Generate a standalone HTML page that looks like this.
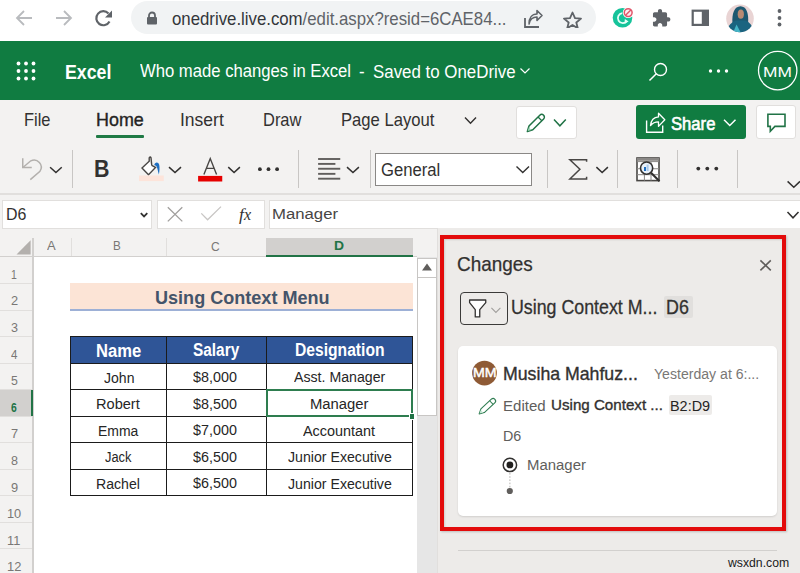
<!DOCTYPE html>
<html><head><meta charset="utf-8"><style>
html,body{margin:0;padding:0;width:800px;height:573px;overflow:hidden;background:#fff}
body{position:relative;font-family:"Liberation Sans", sans-serif}
div,span{position:absolute;white-space:nowrap}
</style></head><body>
<div style="left:0px;top:0px;width:800px;height:41px;background:#fff"></div>
<div style="left:131px;top:1px;width:465px;height:33px;background:#f1f3f4;border-radius:17px"></div>
<svg style="position:absolute;left:14px;top:8px;" width="20" height="20" viewBox="0 0 20 20"><path d="M18 10H4M10 3L3 10L10 17" stroke="#b9bbbe" stroke-width="1.8" fill="none"/></svg>
<svg style="position:absolute;left:54px;top:8px;" width="20" height="20" viewBox="0 0 20 20"><path d="M2 10H16M10 3L17 10L10 17" stroke="#b9bbbe" stroke-width="1.8" fill="none"/></svg>
<svg style="position:absolute;left:93px;top:8px;" width="22" height="20" viewBox="0 0 22 20"><path d="M16.5 13.5A7 7 0 1 1 15.5 5.5" stroke="#5f6368" stroke-width="2.2" fill="none"/><path d="M19 2.5V9.5H12Z" fill="#5f6368"/></svg>
<svg style="position:absolute;left:146px;top:11px;" width="12" height="14" viewBox="0 0 12 14"><path d="M3 6V4.5A3 3 0 0 1 9 4.5V6" stroke="#5f6368" stroke-width="1.8" fill="none"/><rect x="1" y="6" width="10" height="7.5" rx="1" fill="#5f6368"/></svg>
<span class="t0" style="left:171.83px;top:10.97px;font-size:17.59px;line-height:17.59px;transform:scaleX(0.9548);transform-origin:0 0;color:#33363a">onedrive.live.com<span style="color:#5f6368">/edit.aspx?resid=6CAE84...</span></span>
<svg style="position:absolute;left:522px;top:9px;" width="22" height="20" viewBox="0 0 22 20"><path d="M3 9V18H17" stroke="#5f6368" stroke-width="1.8" fill="none"/><path d="M7 15C8 10 11 8 15 8V11.5L20 6.5L15 1.5V5C10 5 7 9 7 15Z" stroke="#5f6368" stroke-width="1.6" fill="none" stroke-linejoin="round"/></svg>
<svg style="position:absolute;left:562px;top:11px;" width="21" height="17" viewBox="0 0 21 17"><path d="M10.5 1.5L13 7.2L19 7.6L14.3 11.5L15.8 17.3L10.5 14L5.2 17.3L6.7 11.5L2 7.6L8 7.2Z" stroke="#5f6368" stroke-width="1.8" fill="none" stroke-linejoin="round"/></svg>
<svg style="position:absolute;left:0;top:0" width="800" height="573" viewBox="0 0 800 573"><circle cx="622.5" cy="17.8" r="9.8" fill="#15c39a"/><path d="M622.3,13.2 A5,5 0 1 0 627,21" stroke="#e6fff7" stroke-width="1.8" fill="none"/><path d="M624.8,19 L628.6,21.4 L624.6,23.6 Z" fill="#e6fff7"/><circle cx="628.2" cy="12.6" r="5.4" fill="#fff"/><circle cx="628.2" cy="12.6" r="3.9" stroke="#e0566a" stroke-width="1.5" fill="#fdf0f2"/><path d="M625.6,15.2 L630.8,10" stroke="#e0566a" stroke-width="1.4"/></svg>
<svg style="position:absolute;left:0;top:0" width="800" height="573" viewBox="0 0 800 573"><g transform="translate(651.3,8.2) scale(0.83)"><path d="M20.5 11H19V7c0-1.1-.9-2-2-2h-4V3.5C13 2.12 11.88 1 10.5 1S8 2.12 8 3.5V5H4c-1.1 0-1.99.9-1.99 2v3.8H3.5c1.49 0 2.7 1.210 2.7 2.7s-1.21 2.7-2.7 2.7H2V20c0 1.1.9 2 2 2h3.8v-1.5c0-1.49 1.21-2.7 2.7-2.7 1.49 0 2.7 1.21 2.7 2.7V22H17c1.1 0 2-.9 2-2v-4h1.5c1.38 0 2.5-1.12 2.5-2.5S21.88 11 20.5 11z" fill="#5f6368"/></g></svg>
<svg style="position:absolute;left:0;top:0" width="800" height="573" viewBox="0 0 800 573"><rect x="692.7" y="10.7" width="15.2" height="14.2" stroke="#5f6368" stroke-width="2.2" fill="none"/><rect x="701.8" y="10" width="7.2" height="16" fill="#5f6368"/></svg>
<svg style="position:absolute;left:0;top:0" width="800" height="573" viewBox="0 0 800 573"><defs><clipPath id="av"><circle cx="740" cy="18.4" r="13.8"/></clipPath></defs><circle cx="740" cy="18.4" r="13.8" fill="#e9d4d4"/><g clip-path="url(#av)"><path d="M732.5,24 C731.5,13 734.5,6.5 740.5,6.2 C746.5,6.5 749,13 748,24 Z" fill="#1d5870"/><ellipse cx="740.8" cy="14.2" rx="3.1" ry="4.6" fill="#b88a72"/><path d="M726,34 C727,26 732,21.5 736.5,20.5 L745,20.5 C750,22 753,26 754,34 Z" fill="#1b6480"/><path d="M732.5,34 L736.5,24.5 L741.5,34 Z" fill="#44b4c6"/></g></svg>
<svg style="position:absolute;left:776px;top:8px;" width="8" height="20" viewBox="0 0 8 20"><circle cx="3.5" cy="3" r="1.9" fill="#5f6368"/><circle cx="3.5" cy="10" r="1.9" fill="#5f6368"/><circle cx="3.5" cy="16.5" r="1.9" fill="#5f6368"/></svg>
<div style="left:0px;top:41px;width:800px;height:59px;background:#107c41"></div>
<svg style="position:absolute;left:16px;top:60.5px;" width="22" height="22" viewBox="0 0 22 22"><circle cx="2.5" cy="2.5" r="1.9" fill="#fff"/><circle cx="2.5" cy="10.0" r="1.9" fill="#fff"/><circle cx="2.5" cy="17.5" r="1.9" fill="#fff"/><circle cx="10.0" cy="2.5" r="1.9" fill="#fff"/><circle cx="10.0" cy="10.0" r="1.9" fill="#fff"/><circle cx="10.0" cy="17.5" r="1.9" fill="#fff"/><circle cx="17.5" cy="2.5" r="1.9" fill="#fff"/><circle cx="17.5" cy="10.0" r="1.9" fill="#fff"/><circle cx="17.5" cy="17.5" r="1.9" fill="#fff"/></svg>
<span class="t1" style="left:64.76px;top:60.91px;font-size:21.08px;line-height:21.08px;transform:scaleX(0.8423);transform-origin:0 0;font-weight:bold;color:#fff">Excel</span>
<span class="t2" style="left:139.50px;top:61.51px;font-size:18.90px;line-height:18.90px;transform:scaleX(0.8814);transform-origin:0 0;color:#fff">Who made changes in Excel</span>
<span class="t3" style="left:358.73px;top:62.85px;font-size:18.90px;line-height:18.90px;transform:scaleX(0.8891);transform-origin:0 0;color:#fff">-</span>
<span class="t4" style="left:372.66px;top:62.88px;font-size:18.90px;line-height:18.90px;transform:scaleX(0.8937);transform-origin:0 0;color:#fff">Saved to OneDrive</span>
<svg style="position:absolute;left:519px;top:67px;" width="12" height="8" viewBox="0 0 12 8"><path d="M1.5 1.5L6 6L10.5 1.5" stroke="#fff" stroke-width="1.2" fill="none"/></svg>
<svg style="position:absolute;left:647px;top:62px;" width="22" height="21" viewBox="0 0 22 21"><circle cx="13.5" cy="7.5" r="6" stroke="#fff" stroke-width="1.4" fill="none"/><path d="M9.3 11.7L2.5 18.5" stroke="#fff" stroke-width="1.5"/></svg>
<svg style="position:absolute;left:708px;top:67px;" width="22" height="8" viewBox="0 0 22 8"><circle cx="2.5" cy="4" r="1.7" fill="#fff"/><circle cx="10.5" cy="4" r="1.7" fill="#fff"/><circle cx="18.5" cy="4" r="1.7" fill="#fff"/></svg>
<svg style="position:absolute;left:757px;top:50px;" width="42" height="42" viewBox="0 0 42 42"><circle cx="20.7" cy="20.6" r="19.2" stroke="#fff" stroke-width="1.3" fill="none"/></svg>
<span class="t5" style="left:762.61px;top:66.31px;font-size:13.81px;line-height:13.81px;transform:scaleX(1.2570);transform-origin:0 0;color:#fff">MM</span>
<div style="left:0px;top:100px;width:800px;height:93px;background:#f3f2f1"></div>
<div style="left:0px;top:193px;width:800px;height:1.5px;background:#e1dfdd"></div>
<div style="left:0px;top:194.5px;width:800px;height:6px;background:#f3f2f1"></div>
<span class="t6" style="left:23.68px;top:110.62px;font-size:18.17px;line-height:18.17px;transform:scaleX(0.9050);transform-origin:0 0;color:#323130">File</span>
<span class="t7" style="left:95.57px;top:110.62px;font-size:18.17px;line-height:18.17px;transform:scaleX(0.9867);transform-origin:0 0;-webkit-text-stroke:0.35px currentColor;color:#252423">Home</span>
<div style="left:96px;top:134.5px;width:48px;height:3.5px;background:#1f7a45;border-radius:1px"></div>
<span class="t8" style="left:180.43px;top:110.62px;font-size:18.17px;line-height:18.17px;transform:scaleX(0.9632);transform-origin:0 0;color:#323130">Insert</span>
<span class="t9" style="left:262.68px;top:110.62px;font-size:18.17px;line-height:18.17px;transform:scaleX(0.9064);transform-origin:0 0;color:#323130">Draw</span>
<span class="t10" style="left:340.67px;top:110.62px;font-size:18.17px;line-height:18.17px;transform:scaleX(0.9157);transform-origin:0 0;color:#323130">Page Layout</span>
<div style="left:515.5px;top:105.5px;width:61.5px;height:33.5px;background:#fff;border:1px solid #e1dfdd;border-radius:3px;box-sizing:border-box"></div>
<div style="left:635.5px;top:105px;width:110px;height:34.3px;background:#107c41;border-radius:3px"></div>
<span class="t11" style="left:670.87px;top:116.08px;font-size:17.44px;line-height:17.44px;transform:scaleX(0.9548);transform-origin:0 0;-webkit-text-stroke:0.6px currentColor;color:#fff">Share</span>
<div style="left:756px;top:105px;width:40px;height:34px;background:#fff;border:1px solid #e1dfdd;border-radius:3px;box-sizing:border-box"></div>
<div style="left:71.5px;top:149.5px;width:1px;height:38px;background:#c8c6c4"></div>
<span class="t12" style="left:93.50px;top:156.70px;font-size:23.98px;line-height:23.98px;transform:scaleX(0.8932);transform-origin:0 0;font-weight:bold;color:#323130">B</span>
<div style="left:297.5px;top:149.5px;width:1px;height:38px;background:#c8c6c4"></div>
<div style="left:369.5px;top:149.5px;width:1px;height:38px;background:#c8c6c4"></div>
<div style="left:375px;top:152.5px;width:157px;height:33.5px;background:#fff;border:1px solid #8a8886;box-sizing:border-box"></div>
<span class="t13" style="left:381.17px;top:160.88px;font-size:18.90px;line-height:18.90px;transform:scaleX(0.8821);transform-origin:0 0;color:#323130">General</span>
<div style="left:547px;top:149.5px;width:1px;height:38px;background:#c8c6c4"></div>
<div style="left:616.5px;top:149.5px;width:1px;height:38px;background:#c8c6c4"></div>
<div style="left:677px;top:149.5px;width:1px;height:38px;background:#c8c6c4"></div>
<div style="left:736.5px;top:149.5px;width:1px;height:38px;background:#c8c6c4"></div>
<div style="left:0px;top:200px;width:800px;height:33px;background:#f3f2f1"></div>
<div style="left:2px;top:200px;width:150px;height:28.5px;background:#fff;border:1px solid #e1dfdd;box-sizing:border-box"></div>
<span class="t14" style="left:6.22px;top:206.32px;font-size:16.28px;line-height:16.28px;transform:scaleX(0.9802);transform-origin:0 0;color:#323130">D6</span>
<div style="left:156.5px;top:200px;width:108px;height:28.5px;background:#fff;border:1px solid #e1dfdd;box-sizing:border-box"></div>
<span style="left:239px;top:205.69px;font-size:17.5px;line-height:17.5px;color:#323130;font-family:'Liberation Serif',serif"><i>f</i><i style="font-size:16px">x</i></span>
<div style="left:269px;top:200px;width:535px;height:28.5px;background:#fff;border:1px solid #e1dfdd;box-sizing:border-box"></div>
<span class="t15" style="left:271.66px;top:207.25px;font-size:14.53px;line-height:14.53px;transform:scaleX(1.1526);transform-origin:0 0;color:#484644">Manager</span>
<div style="left:0px;top:233px;width:440px;height:340px;background:#f3f2f1"></div>
<div style="left:33px;top:257px;width:384px;height:316px;background:#fff"></div>
<div style="left:0px;top:255.5px;width:417px;height:1.5px;background:#d2d0ce"></div>
<div style="left:32px;top:238px;width:1.5px;height:335px;background:#d2d0ce"></div>
<div style="left:70.5px;top:238px;width:1px;height:17.5px;background:#e1dfdd"></div>
<div style="left:165.5px;top:238px;width:1px;height:17.5px;background:#e1dfdd"></div>
<div style="left:265.5px;top:238px;width:147px;height:17.5px;background:#d2d0ce"></div>
<div style="left:265.5px;top:254.5px;width:147px;height:2px;background:#217346"></div>
<span class="t16" style="left:47.00px;top:240.04px;font-size:12.35px;line-height:12.35px;transform:scaleX(1.0547);transform-origin:0 0;color:#797775">A</span>
<span class="t17" style="left:113.47px;top:240.04px;font-size:12.35px;line-height:12.35px;transform:scaleX(0.9443);transform-origin:0 0;color:#797775">B</span>
<span class="t18" style="left:211.20px;top:240.67px;font-size:12.35px;line-height:12.35px;transform:scaleX(0.9764);transform-origin:0 0;color:#797775">C</span>
<span class="t19" style="left:333.52px;top:240.04px;font-size:12.35px;line-height:12.35px;transform:scaleX(1.1279);transform-origin:0 0;font-weight:bold;color:#217346">D</span>
<div style="left:0px;top:283.0px;width:32px;height:0.8px;background:#e1dfdd"></div>
<span class="t20" style="left:11.16px;top:267.93px;font-size:13.08px;line-height:13.08px;transform:scaleX(0.8000);transform-origin:0 0;color:#797775">1</span>
<div style="left:0px;top:309.5px;width:32px;height:0.8px;background:#e1dfdd"></div>
<span class="t21" style="left:10.66px;top:294.49px;font-size:13.08px;line-height:13.08px;transform:scaleX(0.9805);transform-origin:0 0;color:#797775">2</span>
<div style="left:0px;top:336.0px;width:32px;height:0.8px;background:#e1dfdd"></div>
<span class="t22" style="left:10.80px;top:321.05px;font-size:13.08px;line-height:13.08px;transform:scaleX(0.9596);transform-origin:0 0;color:#797775">3</span>
<div style="left:0px;top:362.5px;width:32px;height:0.8px;background:#e1dfdd"></div>
<span class="t23" style="left:11.07px;top:347.61px;font-size:13.08px;line-height:13.08px;transform:scaleX(0.8844);transform-origin:0 0;color:#797775">4</span>
<div style="left:0px;top:389.0px;width:32px;height:0.8px;background:#e1dfdd"></div>
<span class="t24" style="left:10.81px;top:374.17px;font-size:13.08px;line-height:13.08px;transform:scaleX(0.9396);transform-origin:0 0;color:#797775">5</span>
<div style="left:0px;top:415.5px;width:32px;height:0.8px;background:#e1dfdd"></div>
<div style="left:0px;top:389.5px;width:32px;height:26.5px;background:#d2d0ce"></div>
<div style="left:31px;top:389.5px;width:2px;height:26.5px;background:#217346"></div>
<span class="t25" style="left:10.89px;top:400.73px;font-size:13.08px;line-height:13.08px;transform:scaleX(0.7920);transform-origin:0 0;font-weight:bold;color:#217346">6</span>
<div style="left:0px;top:442.0px;width:32px;height:0.8px;background:#e1dfdd"></div>
<span class="t26" style="left:10.66px;top:427.29px;font-size:13.08px;line-height:13.08px;transform:scaleX(0.9805);transform-origin:0 0;color:#797775">7</span>
<div style="left:0px;top:468.5px;width:32px;height:0.8px;background:#e1dfdd"></div>
<span class="t27" style="left:10.80px;top:453.85px;font-size:13.08px;line-height:13.08px;transform:scaleX(0.9596);transform-origin:0 0;color:#797775">8</span>
<div style="left:0px;top:495.0px;width:32px;height:0.8px;background:#e1dfdd"></div>
<span class="t28" style="left:10.66px;top:481.02px;font-size:13.08px;line-height:13.08px;transform:scaleX(0.9805);transform-origin:0 0;color:#797775">9</span>
<div style="left:0px;top:521.5px;width:32px;height:0.8px;background:#e1dfdd"></div>
<span class="t29" style="left:7.38px;top:506.97px;font-size:13.08px;line-height:13.08px;transform:scaleX(0.9785);transform-origin:0 0;color:#797775">10</span>
<div style="left:0px;top:548.0px;width:32px;height:0.8px;background:#e1dfdd"></div>
<span class="t30" style="left:7.38px;top:533.53px;font-size:13.08px;line-height:13.08px;transform:scaleX(0.9745);transform-origin:0 0;color:#797775">11</span>
<div style="left:0px;top:574.5px;width:32px;height:0.8px;background:#e1dfdd"></div>
<span class="t31" style="left:7.37px;top:560.09px;font-size:13.08px;line-height:13.08px;transform:scaleX(0.9884);transform-origin:0 0;color:#797775">12</span>
<div style="left:70px;top:283px;width:342.5px;height:26px;background:#fce4d6"></div>
<div style="left:70px;top:308.5px;width:342.5px;height:2px;background:#9db0d6"></div>
<span class="t32" style="left:154.67px;top:288.20px;font-size:19.26px;line-height:19.26px;transform:scaleX(0.9382);transform-origin:0 0;font-weight:bold;color:#44546a">Using Context Menu</span>
<div style="left:70px;top:336.5px;width:342.5px;height:26.5px;background:#2f5597"></div>
<div style="left:70px;top:336px;width:343px;height:1.3px;background:#1b1b1b"></div>
<div style="left:70px;top:362.5px;width:343px;height:1.3px;background:#1b1b1b"></div>
<div style="left:70px;top:389px;width:343px;height:1.3px;background:#1b1b1b"></div>
<div style="left:70px;top:415.5px;width:343px;height:1.3px;background:#1b1b1b"></div>
<div style="left:70px;top:442px;width:343px;height:1.3px;background:#1b1b1b"></div>
<div style="left:70px;top:468.5px;width:343px;height:1.3px;background:#1b1b1b"></div>
<div style="left:70px;top:495px;width:343px;height:1.3px;background:#1b1b1b"></div>
<div style="left:70px;top:336px;width:1.3px;height:160px;background:#1b1b1b"></div>
<div style="left:165.5px;top:336px;width:1.3px;height:160px;background:#1b1b1b"></div>
<div style="left:266px;top:336px;width:1.3px;height:160px;background:#1b1b1b"></div>
<div style="left:412px;top:336px;width:1.3px;height:160px;background:#1b1b1b"></div>
<span class="t33" style="left:95.84px;top:342.91px;font-size:17.44px;line-height:17.44px;transform:scaleX(0.9519);transform-origin:0 0;font-weight:bold;color:#fff">Name</span>
<span class="t34" style="left:193.29px;top:342.40px;font-size:17.44px;line-height:17.44px;transform:scaleX(0.8832);transform-origin:0 0;font-weight:bold;color:#fff">Salary</span>
<span class="t35" style="left:294.90px;top:342.40px;font-size:17.44px;line-height:17.44px;transform:scaleX(0.8974);transform-origin:0 0;font-weight:bold;color:#fff">Designation</span>
<span class="t36" style="left:104.22px;top:370.84px;font-size:14.53px;line-height:14.53px;transform:scaleX(0.9675);transform-origin:0 0;color:#262626">John</span>
<span class="t37" style="left:192.86px;top:370.20px;font-size:14.53px;line-height:14.53px;transform:scaleX(0.9886);transform-origin:0 0;color:#262626">$8,000</span>
<span class="t38" style="left:293.90px;top:370.20px;font-size:14.53px;line-height:14.53px;transform:scaleX(0.9748);transform-origin:0 0;color:#262626">Asst. Manager</span>
<span class="t39" style="left:96.33px;top:396.70px;font-size:14.53px;line-height:14.53px;transform:scaleX(1.0048);transform-origin:0 0;color:#262626">Robert</span>
<span class="t40" style="left:192.86px;top:396.70px;font-size:14.53px;line-height:14.53px;transform:scaleX(0.9886);transform-origin:0 0;color:#262626">$8,500</span>
<span class="t41" style="left:309.61px;top:396.70px;font-size:14.53px;line-height:14.53px;transform:scaleX(1.0222);transform-origin:0 0;color:#262626">Manager</span>
<span class="t42" style="left:97.63px;top:423.84px;font-size:14.53px;line-height:14.53px;transform:scaleX(0.9610);transform-origin:0 0;color:#262626">Emma</span>
<span class="t43" style="left:192.86px;top:423.20px;font-size:14.53px;line-height:14.53px;transform:scaleX(0.9886);transform-origin:0 0;color:#262626">$7,000</span>
<span class="t44" style="left:303.40px;top:423.84px;font-size:14.53px;line-height:14.53px;transform:scaleX(0.9921);transform-origin:0 0;color:#262626">Accountant</span>
<span class="t45" style="left:104.74px;top:449.70px;font-size:14.53px;line-height:14.53px;transform:scaleX(0.8853);transform-origin:0 0;color:#262626">Jack</span>
<span class="t46" style="left:192.86px;top:449.70px;font-size:14.53px;line-height:14.53px;transform:scaleX(0.9886);transform-origin:0 0;color:#262626">$6,500</span>
<span class="t47" style="left:287.72px;top:449.70px;font-size:14.53px;line-height:14.53px;transform:scaleX(0.9747);transform-origin:0 0;color:#262626">Junior Executive</span>
<span class="t48" style="left:96.37px;top:476.84px;font-size:14.53px;line-height:14.53px;transform:scaleX(0.9729);transform-origin:0 0;color:#262626">Rachel</span>
<span class="t49" style="left:192.86px;top:476.20px;font-size:14.53px;line-height:14.53px;transform:scaleX(0.9886);transform-origin:0 0;color:#262626">$6,500</span>
<span class="t50" style="left:287.72px;top:476.84px;font-size:14.53px;line-height:14.53px;transform:scaleX(0.9747);transform-origin:0 0;color:#262626">Junior Executive</span>
<div style="left:265.5px;top:388.8px;width:147.8px;height:28.3px;border:2px solid #2e7d4f;box-sizing:border-box"></div>
<div style="left:409.8px;top:414.2px;width:4.6px;height:4.6px;background:#217346;outline:1px solid #fff"></div>
<div style="left:417px;top:257px;width:20px;height:316px;background:#e6e6e6"></div>
<div style="left:417px;top:258px;width:19.8px;height:157.8px;background:#fff;border:1.2px solid #c8c6c4;box-sizing:border-box"></div>
<div style="left:417px;top:258px;width:19.8px;height:19.5px;background:#fff;border:1.2px solid #c8c6c4;box-sizing:border-box"></div>
<div style="left:437px;top:228px;width:363px;height:345px;background:#edebe9"></div>
<div style="left:437px;top:228px;width:1px;height:345px;background:#e1dfdd"></div>
<span class="t51" style="left:457.05px;top:254.33px;font-size:19.99px;line-height:19.99px;transform:scaleX(0.9470);transform-origin:0 0;-webkit-text-stroke:0.25px currentColor;color:#323130">Changes</span>
<div style="left:459.5px;top:292px;width:48px;height:32.7px;border:1px solid #3b3a39;border-radius:4px;box-sizing:border-box"></div>
<span class="t52" style="left:511.08px;top:296.72px;font-size:20.71px;line-height:20.71px;transform:scaleX(0.8596);transform-origin:0 0;-webkit-text-stroke:0.3px currentColor;color:#323130">Using Context M...</span>
<div style="left:663.5px;top:296px;width:29px;height:22px;background:#e1dfdd;border-radius:2px"></div>
<span class="t53" style="left:665.57px;top:296.72px;font-size:20.71px;line-height:20.71px;transform:scaleX(0.8635);transform-origin:0 0;-webkit-text-stroke:0.3px currentColor;color:#323130">D6</span>
<div style="left:457.5px;top:346px;width:319.5px;height:169.5px;background:#fff;border-radius:5px;box-shadow:0 1px 2px rgba(0,0,0,0.12)"></div>
<span class="t54" style="left:503.08px;top:364.62px;font-size:18.17px;line-height:18.17px;transform:scaleX(0.9753);transform-origin:0 0;-webkit-text-stroke:0.35px currentColor;color:#323130">Musiha Mahfuz...</span>
<span class="t55" style="left:653.72px;top:365.83px;font-size:15.26px;line-height:15.26px;transform:scaleX(0.9237);transform-origin:0 0;color:#797775">Yesterday at 6:...</span>
<span class="t56" style="left:503.30px;top:398.84px;font-size:14.53px;line-height:14.53px;transform:scaleX(1.0358);transform-origin:0 0;color:#605e5c">Edited</span>
<span class="t57" style="left:550.54px;top:398.20px;font-size:14.53px;line-height:14.53px;transform:scaleX(1.0434);transform-origin:0 0;-webkit-text-stroke:0.35px currentColor;color:#323130">Using Context ...</span>
<div style="left:668.5px;top:395px;width:43.5px;height:20px;background:#edebe9;border-radius:2px"></div>
<span class="t58" style="left:670.10px;top:398.84px;font-size:14.53px;line-height:14.53px;transform:scaleX(0.9931);transform-origin:0 0;color:#252423">B2:D9</span>
<span class="t59" style="left:503.35px;top:428.95px;font-size:14.53px;line-height:14.53px;transform:scaleX(0.9871);transform-origin:0 0;color:#605e5c">D6</span>
<span class="t60" style="left:526.81px;top:457.08px;font-size:15.26px;line-height:15.26px;transform:scaleX(0.9786);transform-origin:0 0;color:#605e5c">Manager</span>
<svg style="position:absolute;left:0;top:0" width="800" height="573" viewBox="0 0 800 573"><path d="M465,117.5 L470.5,123.3 L476,117.5" stroke="#323130" stroke-width="1.4" fill="none"/><g transform="translate(527,131.8) rotate(-45)"><path d="M0.5,0 L5.5,-2.7 H20.8 A2.7,2.7 0 0 1 20.8,2.7 H5.5 Z" stroke="#217346" stroke-width="1.5" fill="none" stroke-linejoin="round"/><path d="M18.3,-2.7 V2.7" stroke="#217346" stroke-width="1.3"/><path d="M1,0 L4.5,-1.8 V1.8Z" fill="#9fd8b8"/></g><path d="M554,119.6 L559.9,125.8 L565.8,119.6" stroke="#217346" stroke-width="1.5" fill="none"/><path d="M646.6,120.4 V132.3 H662.7 V125.6" stroke="#fff" stroke-width="1.4" fill="none"/><path d="M650.5,125.6 C651,120.5 654,117.2 658.5,116.9 V113.2 L664.8,119.8 L658.5,126.4 V121.9 C655,121.9 652.6,123 650.5,125.6 Z" stroke="#fff" stroke-width="1.3" fill="none" stroke-linejoin="round"/><path d="M724,119.8 L729.75,125.5 L735.5,119.8" stroke="#fff" stroke-width="1.5" fill="none"/><path d="M767.9,126.4 V114.2 H785 V126.4 H774.9 L770.3,131.3 V126.4 Z" stroke="#217346" stroke-width="1.6" fill="none" stroke-linejoin="miter"/><path d="M22.75,158.3 V167.6 H31.75" stroke="#b3b0ad" stroke-width="1.5" fill="none"/><path d="M23.2,167.2 L30.8,160.8 A7.2,7.2 0 0 1 40,171.2 L30.3,179.6" stroke="#b3b0ad" stroke-width="1.5" fill="none"/><path d="M50.1,167.2 L55.925,172.5 L61.75,167.2" stroke="#323130" stroke-width="1.5" fill="none"/><path d="M151.75,165.4 L155.5,167.5 L148.5,174.7 L142,168 L149.2,161.2 Z" fill="#fff"/><path d="M151.75,165.4 L155.5,167.5 L148.5,174.7 L142,168 L149.2,161.2 V157.8 Q150.3,156.2 151,157.8 L151.75,165.4" stroke="#484644" stroke-width="1.4" fill="none" stroke-linejoin="miter"/><path d="M154.2,165.2 C154.8,162 158.2,161.2 159.2,164.8 C159.8,167.8 159.5,171 158.9,174.6 C157.9,171.6 157.6,168.5 156.6,166.6 C155.9,165.6 155,165.3 154.2,165.2 Z" fill="#1e6fc2"/><rect x="139" y="175.5" width="24.75" height="5.6" fill="#fde4da"/><path d="M169,167.1 L175.0,172.5 L181,167.1" stroke="#323130" stroke-width="1.5" fill="none"/><path d="M203.9,174.4 L210.25,158.6 L216.6,174.4 M206.9,168.4 H213.6" stroke="#484644" stroke-width="1.4" fill="none"/><rect x="198.1" y="175.9" width="24.15" height="5.6" fill="#e60000"/><path d="M228.25,167.1 L234.075,172.5 L239.9,167.1" stroke="#323130" stroke-width="1.5" fill="none"/><circle cx="259.9" cy="169.2" r="1.9" fill="#323130"/><circle cx="268.5" cy="169.2" r="1.9" fill="#323130"/><circle cx="277.1" cy="169.2" r="1.9" fill="#323130"/><rect x="318.1" y="158.05" width="22.15" height="1.9" fill="#605e5c"/><rect x="318.1" y="162.95000000000002" width="17.3" height="1.9" fill="#605e5c"/><rect x="318.1" y="167.8" width="22.15" height="1.9" fill="#605e5c"/><rect x="318.1" y="172.9" width="17.3" height="1.9" fill="#605e5c"/><rect x="318.1" y="177.75" width="22.15" height="1.9" fill="#605e5c"/><path d="M347,167.1 L352.95,172.5 L358.9,167.1" stroke="#323130" stroke-width="1.5" fill="none"/><path d="M516.5,166.5 L522.75,172.5 L529,166.5" stroke="#323130" stroke-width="1.4" fill="none"/><path d="M586.6,161.8 V159.75 H569.9 L579.9,169.2 L569.9,178.9 H586.6 V176.8" stroke="#484644" stroke-width="1.5" fill="none" stroke-linejoin="miter"/><path d="M596.4,167.1 L602.15,172.5 L607.9,167.1" stroke="#323130" stroke-width="1.5" fill="none"/><rect x="637" y="158" width="22" height="22.6" stroke="#484644" stroke-width="1.6" fill="#fff"/><rect x="637" y="158" width="22" height="2.8" fill="#8a8886"/><path d="M637,161.6 H659 M637,168.75 H659 M637,174.7 H659 M644.4,161.6 V180.6 M651,161.6 V180.6" stroke="#8a8886" stroke-width="1"/><circle cx="646.6" cy="168.1" r="6.1" fill="#e8f1fa" stroke="#323130" stroke-width="1.6"/><rect x="644" y="167" width="2" height="4" fill="#1e6fc2"/><rect x="646.6" y="164.6" width="2" height="6.4" fill="#a9c7e8"/><path d="M651,172.8 L659.5,181.2" stroke="#323130" stroke-width="2.2"/><circle cx="698.3" cy="168.6" r="1.9" fill="#323130"/><circle cx="707.3" cy="168.6" r="1.9" fill="#323130"/><circle cx="716.3" cy="168.6" r="1.9" fill="#323130"/><path d="M787.6,181.4 L793.8,187.2 L800,181.4" stroke="#323130" stroke-width="1.5" fill="none"/><path d="M140.8,213.2 L144.05,216.4 L147.3,213.2" stroke="#323130" stroke-width="1.8" fill="none"/><path d="M167.8,207.2 L182.3,221.4 M182.3,207.2 L167.8,221.4" stroke="#a19f9d" stroke-width="1.3"/><path d="M201.3,213.4 L207.6,219.8 L221,206.6" stroke="#c8c6c4" stroke-width="1.3" fill="none"/><path d="M787.5,212 L793.0,217.8 L798.5,212" stroke="#323130" stroke-width="1.5" fill="none"/><path d="M30.6,240.3 V254.5 H16.5 Z" fill="#b3b0ad"/><path d="M427,263.5 L432,270.5 H422 Z" fill="#605e5c"/><path d="M760.4,260.4 L770.8,270.3 M770.8,260.4 L760.4,270.3" stroke="#605e5c" stroke-width="1.6"/><path d="M469.6,300 H485.75 V302.6 L479.75,309.6 V316.9 H475.25 V309.6 L469.6,302.6 Z" stroke="#323130" stroke-width="1.3" fill="#fff" stroke-linejoin="round"/><path d="M491.4,307.9 L495.9,312.4 L500.4,307.9" stroke="#a19f9d" stroke-width="1.1" fill="none"/><circle cx="484.5" cy="373.1" r="12.4" fill="#8e5a35"/><g transform="translate(478.8,414.3) rotate(-43)"><path d="M0.5,0 L5.2,-2.5 H19.5 A2.5,2.5 0 0 1 19.5,2.5 H5.2 Z" stroke="#2f7d52" stroke-width="1.1" fill="none" stroke-linejoin="round"/><path d="M17.2,-2.5 V2.5" stroke="#2f7d52" stroke-width="1"/><path d="M1,0 L4.4,-1.7 V1.7Z" fill="#c5e6d2"/></g><circle cx="509.9" cy="464.9" r="6.7" stroke="#323130" stroke-width="1.5" fill="#fff"/><circle cx="509.9" cy="464.9" r="3.4" fill="#201f1e"/><path d="M509.9,473 V488" stroke="#a19f9d" stroke-width="0.8" stroke-dasharray="1.6 1.6"/><circle cx="509.8" cy="491" r="3.1" fill="#605e5c"/></svg>
<span class="t61" style="left:473.16px;top:366.89px;font-size:12.06px;line-height:12.06px;transform:scaleX(1.1771);transform-origin:0 0;-webkit-text-stroke:0.4px currentColor;color:#fff">MM</span>
<div style="left:440px;top:235px;width:346px;height:296px;border:4px solid #e30b0b;box-sizing:border-box;box-shadow:1px 1px 2px rgba(0,0,0,0.2), inset 1px 1px 2px rgba(0,0,0,0.12)"></div>
<div style="left:457.5px;top:549.5px;width:319px;height:1px;background:#d2d0ce"></div>
<span class="t62" style="left:728.10px;top:557.34px;font-size:12.50px;line-height:12.50px;transform:scaleX(0.9781);transform-origin:0 0;color:#1b1b1b">wsxdn.com</span>
</body></html>
